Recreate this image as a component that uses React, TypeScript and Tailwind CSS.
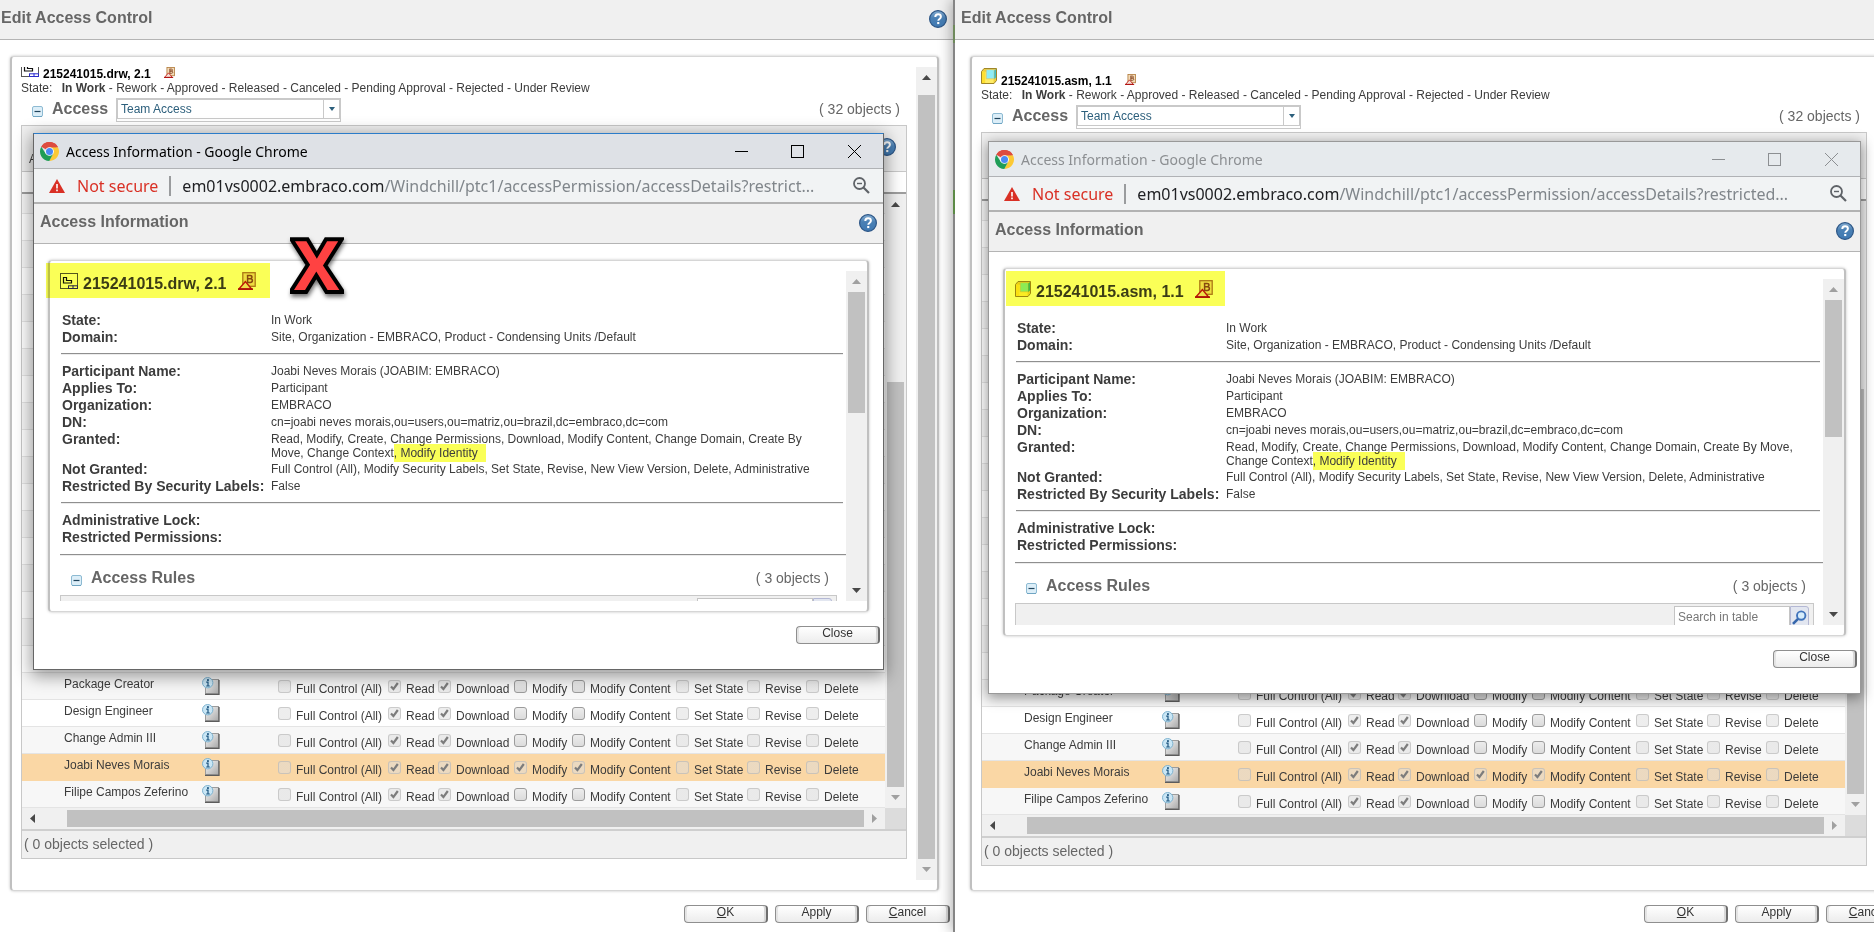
import React from "react";

type PaneData = {
  file: string;
  kind: "drw" | "asm";
  active: boolean;
  url: string;
};

const NAMES = [
  "Package Creator",
  "Design Engineer",
  "Change Admin III",
  "Joabi Neves Morais",
  "Filipe Campos Zeferino",
];

const PERMS = [
  { label: "Full Control (All)", width: "w-[110px]" },
  { label: "Read", width: "w-[50px]" },
  { label: "Download", width: "w-[76px]" },
  { label: "Modify", width: "w-[58px]" },
  { label: "Modify Content", width: "w-[104px]" },
  { label: "Set State", width: "w-[71px]" },
  { label: "Revise", width: "w-[59px]" },
  { label: "Delete", width: "w-auto" },
];

function HelpIcon() {
  return (
    <svg width="18" height="18" viewBox="0 0 18 18" aria-hidden="true" className="block">
      <defs>
        <linearGradient id="helpFill" x1="0" y1="0" x2="0" y2="1">
          <stop offset="0" stopColor="#86aed2" />
          <stop offset="0.45" stopColor="#4a80b4" />
          <stop offset="1" stopColor="#3f79b3" />
        </linearGradient>
      </defs>
      <circle cx="9" cy="9" r="8.4" fill="url(#helpFill)" stroke="#2d5686" strokeWidth="1.2" />
      <path d="M6.3 7.1c0-1.9 1.2-2.8 2.8-2.8s2.8.9 2.8 2.4c0 1.2-.7 1.7-1.5 2.3-.8.5-1.1.9-1.1 1.8" fill="none" stroke="#fff" strokeWidth="2" />
      <rect x="8.2" y="12" width="2.1" height="2.1" fill="#fff" />
    </svg>
  );
}

function DrawingIcon() {
  return (
    <svg width="18" height="16" viewBox="0 0 18 16" aria-hidden="true" className="block shrink-0">
      <rect x="0.5" y="0.5" width="17" height="15" fill="#fff" stroke="#555" />
      <path d="M3.5 4.5h3v3h5v2.5h-8z" fill="#fff" stroke="#111" strokeWidth="1.2" />
      <rect x="8.5" y="12.8" width="9" height="2.7" fill="#fff" stroke="#2a2ac8" />
      <path d="M13 12.5v3" stroke="#2020d8" />
    </svg>
  );
}

function AssemblyIcon() {
  return (
    <svg width="16" height="16" viewBox="0 0 16 16" aria-hidden="true" className="block shrink-0">
      <path d="M0.5 3.5L3 0.5h12.5v12l-2.5 3H0.5z" fill="#f0cf3c" stroke="#a08628" />
      <path d="M1 3.8h11.6v11.2H1z" fill="#ffec66" />
      <path d="M1 3.8h3.2v11.2H1z" fill="#ffe030" />
      <path d="M5.2 1.6h8v9.2h-8z" fill="#8fecf6" stroke="#e4c050" strokeWidth="0.6" />
      <path d="M13.2 2.4L15 0.9v8.6l-1.8 1.6z" fill="#45bac4" />
    </svg>
  );
}

function BaselineIcon({ size }: { size: number }) {
  return (
    <svg width={size} height={size} viewBox="0 0 18 18" aria-hidden="true" className="block shrink-0">
      <rect x="4.8" y="0.7" width="12.4" height="13.6" fill="#f3dcb8" stroke="#b07838" strokeWidth="1.3" />
      <path d="M8.8 3.4h3.2c2.6 0 2.6 3.3 0 3.3H9.4h2.9c2.8 0 2.8 3.7 0 3.7H8.8M9.6 3.4v7" fill="none" stroke="#8a4a28" strokeWidth="1.5" />
      <path d="M0.9 17L7.4 9.6 13.6 17z" fill="#f4e0d8" stroke="#c01810" strokeWidth="1.4" />
      <path d="M0 17.1h15" stroke="#b01010" strokeWidth="1.6" />
    </svg>
  );
}

function ChromeIcon() {
  return (
    <svg width="19" height="19" viewBox="0 0 20 20" aria-hidden="true" className="block shrink-0">
      <path d="M10 10L1.34 5A10 10 0 0 1 18.66 5z" fill="#dd4b3e" />
      <path d="M10 5.5h8.93A10 10 0 0 1 9.8 20L13.9 12.2z" fill="#fcc934" />
      <path d="M6.1 12.25L1.34 5A10 10 0 0 0 9.8 20l4.1-7.75z" fill="#1f9d57" />
      <path d="M1.34 5A10 10 0 0 1 18.93 5.5H10z" fill="#dd4b3e" />
      <circle cx="10" cy="10" r="4.6" fill="#fff" />
      <circle cx="10" cy="10" r="3.7" fill="#4a8af4" />
    </svg>
  );
}

function InfoPageIcon() {
  return (
    <svg width="18" height="18" viewBox="0 0 18 18" aria-hidden="true" className="block">
      <defs>
        <linearGradient id="pageFill" x1="0" y1="0" x2="1" y2="1">
          <stop offset="0" stopColor="#fafafa" />
          <stop offset="1" stopColor="#a8a8a8" />
        </linearGradient>
      </defs>
      <rect x="3.5" y="2.5" width="13" height="14" fill="url(#pageFill)" stroke="#9c9c9c" />
      <path d="M17 3v14.3H3" fill="none" stroke="#5c5c5c" strokeWidth="1.3" />
      <circle cx="5.7" cy="5.7" r="5.2" fill="#c9e6f5" stroke="#7db2cf" />
      <rect x="5" y="2.2" width="1.9" height="1.7" fill="#1d5580" />
      <path d="M4.2 5.2h1.8v3.8M4.2 9h3.6" fill="none" stroke="#1d5580" strokeWidth="1.2" />
    </svg>
  );
}

function CollapseButton({ label }: { label: string }) {
  return (
    <button type="button" aria-label={label} className="mt-1 block size-[11px] shrink-0">
      <svg width="11" height="11" viewBox="0 0 11 11" aria-hidden="true" className="block">
        <rect x="0.5" y="0.5" width="10" height="10" rx="1.5" fill="#dceef8" stroke="#8dbad2" />
        <path d="M1 10.5h9" stroke="#6fa5c3" />
        <path d="M2.5 5.5h6" stroke="#20445c" strokeWidth="1.2" />
      </svg>
    </button>
  );
}

const ARROWS = {
  up: "M0 5L4.5 0 9 5z",
  down: "M0 0h9L4.5 5z",
  left: "M5 0v9L0 4.5z",
  right: "M0 0v9l5-4.5z",
};

function Arrow({ dir, dark }: { dir: keyof typeof ARROWS; dark: boolean }) {
  const vertical = dir === "up" || dir === "down";
  return (
    <span className="flex size-[21px] shrink-0 items-center justify-center">
      <svg width={vertical ? 9 : 5} height={vertical ? 5 : 9} aria-hidden="true">
        <path d={ARROWS[dir]} fill={dark ? "#484848" : "#a0a0a0"} />
      </svg>
    </span>
  );
}

function ScrollBar({
  horizontal = false,
  before,
  thumb,
  after,
  startDark,
  endDark,
}: {
  horizontal?: boolean;
  before: number;
  thumb: number;
  after: number;
  startDark: boolean;
  endDark: boolean;
}) {
  return (
    <div className={horizontal ? "flex h-[21px] grow bg-[#f0f0f0]" : "flex w-[21px] shrink-0 flex-col bg-[#f0f0f0]"}>
      <Arrow dir={horizontal ? "left" : "up"} dark={startDark} />
      <div className={horizontal ? "flex grow py-[2px]" : "flex grow flex-col px-[2px]"}>
        <div style={{ flexGrow: before }} />
        <div className="bg-[#c1c1c1]" style={{ flexGrow: thumb }} />
        <div style={{ flexGrow: after }} />
      </div>
      <Arrow dir={horizontal ? "right" : "down"} dark={endDark} />
    </div>
  );
}

function PushButton({ children }: { children: React.ReactNode }) {
  return (
    <button
      type="button"
      className="h-[18px] w-[84px] rounded-[4px] border border-[#8f8f8f] border-r-2 border-r-[#6e6e6e] bg-linear-to-b from-white to-[#ececec] pb-1 text-[12px] leading-[12px] text-[#333] shadow-[inset_2px_0_0_#e4e4e4,inset_-2px_0_0_#d8d8d8]"
    >
      {children}
    </button>
  );
}

function Permission({ id, label, checked, locked }: { id: string; label: string; checked: boolean; locked: boolean }) {
  return (
    <div className="flex items-start pt-[7px]">
      <span className="relative block size-[13px] shrink-0">
        <input
          id={id}
          type="checkbox"
          defaultChecked={checked}
          disabled={locked}
          className="block size-[13px] appearance-none rounded-[3px] border border-[#9c9c9c] bg-linear-to-b from-[#ececec] to-[#dcdcdc] disabled:border-[#b4b4b4]/60 disabled:from-[#dddddd]/50 disabled:to-[#dddddd]/50"
        />
        {checked && (
          <svg width="13" height="13" viewBox="0 0 13 13" aria-hidden="true" className="pointer-events-none absolute inset-0">
            <path d="M3 6.6l2.4 2.5L9.8 3" fill="none" stroke="#7c7c7c" strokeWidth="2.2" />
          </svg>
        )}
      </span>
      <label htmlFor={id} className="ml-[5px] pt-[2px] text-[12px] leading-[14px] whitespace-nowrap">
        {label}
      </label>
    </div>
  );
}

function AccessTable({ kind }: { kind: string }) {
  const earlier = Array.from({ length: 18 }, (_, i) => i);
  return (
    <div className="flex h-[614px]">
      <div className="flex min-w-0 grow flex-col justify-end overflow-hidden">
        <table className="w-full table-fixed border-collapse">
          <colgroup>
            <col className="w-[42px]" />
            <col className="w-[138px]" />
            <col className="w-[76px]" />
            {PERMS.map((perm) => (
              <col key={perm.label} className={perm.width} />
            ))}
          </colgroup>
          <tbody>
            {earlier.map((i) => (
              <tr key={i} className={i % 2 === 0 ? "h-[27px] bg-[#f7f7f7]" : "h-[27px] bg-white"}>
                <td colSpan={11} className="border-b border-[#e4e4e4] p-0" />
              </tr>
            ))}
            {NAMES.map((name, row) => {
              const selected = row === 3;
              const tone = selected ? "h-[27px] bg-[#fad7a5]" : row % 2 === 0 ? "h-[27px] bg-[#f7f7f7]" : "h-[27px] bg-white";
              const cell = selected ? "border-b border-[#fad7a5] p-0 align-top" : "border-b border-[#e4e4e4] p-0 align-top";
              return (
                <tr key={name} className={tone}>
                  <td className={cell} />
                  <td className={cell}>
                    <div className="pt-[4px] text-[12px] leading-[14px] whitespace-nowrap">{name}</div>
                  </td>
                  <td className={cell}>
                    <div className="pt-[4px]">
                      <InfoPageIcon />
                    </div>
                  </td>
                  {PERMS.map((perm, col) => {
                    const editable = !selected && (col === 3 || col === 4);
                    const checked = col === 1 || col === 2 || (selected && (col === 3 || col === 4));
                    return (
                      <td key={perm.label} className={cell}>
                        <Permission id={kind + "-" + row + "-" + col} label={perm.label} checked={checked} locked={!editable} />
                      </td>
                    );
                  })}
                </tr>
              );
            })}
          </tbody>
        </table>
      </div>
      <ScrollBar before={167} thumb={405} after={0} startDark endDark={false} />
    </div>
  );
}

const FRAME =
  "rounded-[4px] border-x-2 border-y border-x-[#c0c0c0] border-y-[#d6d6d6] bg-white py-[10px] shadow-[0_0_3px_rgba(0,0,0,0.25)]";

function Details({ kind }: { kind: string }) {
  const label = "text-[14px] leading-[17px] font-bold whitespace-nowrap";
  const value = "py-px pr-1 text-[12px] leading-[14px]";
  const grid = "ml-[12px] grid grid-cols-[209px_1fr]";
  const rule = "ml-[11px] mr-[3px] my-[7px] border-t border-b border-t-[#8f8f8f] border-b-[#ececec]";
  return (
    <div className="text-[#3c3c3c]">
      <dl className={grid}>
        <dt className={label}>State:</dt>
        <dd className={value}>In Work</dd>
        <dt className={label}>Domain:</dt>
        <dd className={value}>Site, Organization - EMBRACO, Product - Condensing Units /Default</dd>
      </dl>
      <hr className={rule} />
      <dl className={grid + " pt-px"}>
        <dt className={label}>Participant Name:</dt>
        <dd className={value}>Joabi Neves Morais (JOABIM: EMBRACO)</dd>
        <dt className={label}>Applies To:</dt>
        <dd className={value}>Participant</dd>
        <dt className={label}>Organization:</dt>
        <dd className={value}>EMBRACO</dd>
        <dt className={label}>DN:</dt>
        <dd className={value}>cn=joabi neves morais,ou=users,ou=matriz,ou=brazil,dc=embraco,dc=com</dd>
        <dt className={label}>Granted:</dt>
        <dd className={value}>
          Read, Modify, Create, Change Permissions, Download, Modify Content, Change Domain, Create By{" "}
          {kind === "drw" && <br />}Move,{" "}
          {kind === "asm" && <br />}Change Context
          <span className="bg-[#faff57] py-[2px] pr-2 mix-blend-multiply">, Modify Identity</span>
        </dd>
        <dt className={label}>Not Granted:</dt>
        <dd className={value}>Full Control (All), Modify Security Labels, Set State, Revise, New View Version, Delete, Administrative</dd>
        <dt className={label}>Restricted By Security Labels:</dt>
        <dd className={value}>False</dd>
      </dl>
      <hr className={rule} />
      <dl className={grid + " pt-px"}>
        <dt className={label}>Administrative Lock:</dt>
        <dd />
        <dt className={label}>Restricted Permissions:</dt>
        <dd />
      </dl>
    </div>
  );
}

function Popup({ data }: { data: PaneData }) {
  const { kind, active } = data;
  const isDrawing = kind === "drw";
  return (
    <section
      className={
        active
          ? "absolute top-[133px] right-[69px] left-[33px] border border-[#666] border-t-[#2b7cc9] bg-white shadow-[0_4px_16px_2px_rgba(0,0,0,0.4)]"
          : "absolute top-[141px] right-[13px] left-[33px] border border-[#999] bg-white shadow-[0_3px_12px_1px_rgba(0,0,0,0.4)]"
      }
    >
      <div
        className={
          active
            ? "flex h-[35px] items-center border-b border-[#b0b2b5] bg-[#dee1e6] pl-[6px] text-black"
            : "flex h-[35px] items-center border-b border-[#b0b2b5] bg-[#e6eaed] pl-[6px] text-[#8c8f92]"
        }
      >
        <ChromeIcon />
        <span className="ml-[7px] grow pt-px font-['Noto_Sans','Open_Sans',sans-serif] text-[14px] leading-[20px] whitespace-nowrap">
          Access Information - Google Chrome
        </span>
        <button type="button" aria-label="Minimize" className="flex w-[56px] justify-center">
          <svg width="13" height="13" aria-hidden="true"><path d="M0 6.5h13" stroke="currentColor" /></svg>
        </button>
        <button type="button" aria-label="Maximize" className="flex w-[57px] justify-center">
          <svg width="13" height="13" aria-hidden="true"><rect x="0.5" y="0.5" width="12" height="12" fill="none" stroke="currentColor" /></svg>
        </button>
        <button type="button" aria-label="Close window" className="flex w-[57px] justify-center">
          <svg width="13" height="13" aria-hidden="true"><path d="M0 0l13 13M13 0L0 13" stroke="currentColor" /></svg>
        </button>
      </div>
      <div className="flex h-[35px] items-center border-b-2 border-[#b2b2b2] bg-[#f1f3f4] pr-[13px] pl-[15px] font-['Noto_Sans','Open_Sans',sans-serif] text-[16px] leading-[22px] text-[#202124]">
        <svg width="16" height="14" viewBox="0 0 16 14" aria-hidden="true" className="shrink-0">
          <path d="M8 0l8 14H0z" fill="#d93025" />
          <path d="M8 5v4.4M8 10.6v1.7" stroke="#fff" strokeWidth="1.6" />
        </svg>
        <span className="ml-[12px] whitespace-nowrap text-[#d93025]">Not secure</span>
        <span className="mx-[11px] h-[20px] w-[2px] shrink-0 bg-[#9a9c9e]" />
        <span className="min-w-0 grow overflow-hidden whitespace-nowrap">
          em01vs0002.embraco.com<span className="text-[#80868b]">{data.url}</span>
        </span>
        <button type="button" aria-label="Zoom" className="shrink-0">
          <svg width="17" height="17" viewBox="0 0 17 17" aria-hidden="true" className="block">
            <circle cx="6.5" cy="6.5" r="5.5" fill="none" stroke="#5f6368" strokeWidth="1.8" />
            <path d="M10.5 10.5L16 16" stroke="#5f6368" strokeWidth="2.2" />
            <path d="M4 6.5h5" stroke="#5f6368" strokeWidth="1.4" />
          </svg>
        </button>
      </div>
      <div className="flex h-[40px] items-center justify-between border-b border-[#b4b4b4] bg-[#f0f0f0] pr-[6px] pb-px pl-[6px]">
        <h2 className="pb-[3px] text-[16px] leading-[20px] font-bold text-[#666]">Access Information</h2>
        <button type="button" aria-label="Help"><HelpIcon /></button>
      </div>
      <div className={"relative mt-[16px] mr-[14px] ml-[14px] " + FRAME}>
        <div
          className={
            isDrawing
              ? "absolute top-[2px] left-[-4px] z-10 h-[35px] w-[224px] bg-[#faff57] mix-blend-multiply"
              : "absolute top-[2px] left-[1px] z-10 h-[35px] w-[219px] bg-[#faff57] mix-blend-multiply"
          }
        />
        <div className={isDrawing ? "flex h-[330px]" : "flex h-[346px]"}>
          <div className="min-w-0 grow overflow-hidden">
            <h3 className="mb-[17px] flex h-[24px] items-center pl-[10px] text-[16px] leading-[20px] font-bold text-[#3c3c3c]">
              <span className="pb-[4px]">{isDrawing ? <DrawingIcon /> : <AssemblyIcon />}</span>
              <span className="ml-[5px] pt-px">{data.file}</span>
              <span className="ml-[11px] pb-[4px]"><BaselineIcon size={18} /></span>
            </h3>
            <Details kind={kind} />
            <hr className="mt-[8px] ml-[10px] border-t border-b border-t-[#8f8f8f] border-b-[#ececec]" />
            <div className="flex h-[39px] items-center pt-[5px] pr-[17px] pl-[21px] text-[#666]">
              <CollapseButton label="Collapse access rules" />
              <h4 className="ml-[9px] grow text-[16px] leading-[20px] font-bold">Access Rules</h4>
              <span className="text-[14px] leading-[18px]">( 3 objects )</span>
            </div>
            <div className="mr-[9px] ml-[10px] flex justify-end border border-b-0 border-[#c8c8c8] bg-[#f0f0f0] pt-[2px] pr-[4px] pb-6">
              <input
                type="text"
                aria-label="Search in table"
                placeholder={isDrawing ? "" : "Search in table"}
                className="h-[22px] w-[116px] border border-[#c4c4c4] bg-white pl-[3px] text-[12px] placeholder:text-[#777]"
              />
              <button type="button" aria-label="Search" className="flex h-[22px] w-[19px] items-center justify-center rounded-tr-[3px] border border-[#b4b8d4] bg-[#e2e6f0]">
                <svg width="15" height="15" viewBox="0 0 15 15" aria-hidden="true">
                  <circle cx="9.2" cy="5.6" r="4.2" fill="#d6ecfb" stroke="#4174bc" strokeWidth="1.9" />
                  <path d="M6 8.8L1 13.8" stroke="#3566ac" strokeWidth="2.6" />
                </svg>
              </button>
            </div>
          </div>
          {isDrawing ? (
            <ScrollBar before={0} thumb={121} after={167} startDark={false} endDark />
          ) : (
            <ScrollBar before={0} thumb={137} after={167} startDark={false} endDark />
          )}
        </div>
      </div>
      <div className="flex justify-end pt-[14px] pr-[3px] pb-[25px]">
        <PushButton>Close</PushButton>
      </div>
    </section>
  );
}

function Pane({ data }: { data: PaneData }) {
  const isDrawing = data.kind === "drw";
  const selectId = "view-" + data.kind;
  return (
    <div className="relative flex min-h-screen flex-col bg-white text-[#3c3c3c]">
      <header
        className={
          isDrawing
            ? "flex h-[40px] items-center justify-between border-b border-[#b4b4b4] bg-[#f0f0f0] pr-[6px] pb-[3px] pl-px"
            : "flex h-[40px] items-center border-b border-[#b4b4b4] bg-[#f0f0f0] pb-[3px] pl-[6px]"
        }
      >
        <h1 className="text-[16px] leading-[20px] font-bold text-[#666]">Edit Access Control</h1>
        {isDrawing && <button type="button" aria-label="Help" className="pt-[2px]"><HelpIcon /></button>}
      </header>
      <main className={isDrawing ? "mt-[16px] mr-[14px] ml-[10px] flex grow flex-col " + FRAME : "mt-[16px] -mr-[25px] ml-[15px] flex grow flex-col " + FRAME}>
        <div className="flex grow">
          <div className="min-w-0 grow pr-[9px] pl-[9px]">
            <div className={isDrawing ? "flex h-[14px] items-end overflow-hidden" : "flex h-[21px] items-end"}>
              <span className={isDrawing ? "self-end pb-[4px]" : "self-start pt-px"}>{isDrawing ? <DrawingIcon /> : <AssemblyIcon />}</span>
              <span className="ml-[4px] text-[12px] leading-[14px] font-bold text-black">{data.file}</span>
              <span className="ml-[13px] pb-[3px]"><BaselineIcon size={11} /></span>
            </div>
            <p className="text-[12px] leading-[14px] whitespace-nowrap">
              State: <b className="ml-[6px]">In Work</b> - Rework - Approved - Released - Canceled - Pending Approval - Rejected - Under Review
            </p>
            <div className="flex h-[30px] items-center pr-[7px] pb-px pl-[11px] text-[#666]">
              <CollapseButton label="Collapse access" />
              <h2 className="ml-[9px] w-[64px] pb-px text-[16px] leading-[20px] font-bold">Access</h2>
              <label htmlFor={selectId} className="sr-only">View</label>
              <span className="relative block">
                <select id={selectId} defaultValue="team" className="block h-[24px] w-[225px] appearance-none border-2 border-b-4 border-double border-[#c9c9c9] bg-white pl-[3px] text-[12px] leading-[18px] text-[#2c5f7c]">
                  <option value="team">Team Access</option>
                </select>
                <span className="pointer-events-none absolute top-[2px] right-[2px] bottom-[3px] flex w-[16px] items-center justify-center border-l border-[#c9c9c9]">
                  <svg width="6" height="4" aria-hidden="true"><path d="M0 0h6L3 4z" fill="#2c5f7c" /></svg>
                </span>
              </span>
              <span className="grow pb-px text-right text-[14px] leading-[18px]">( 32 objects )</span>
            </div>
            <div className="border border-[#c8c8c8]">
              <div className="flex h-[46px] items-start justify-between border-b border-[#c8c8c8] bg-[#f0f0f0] pt-[12px] pr-[10px] pl-[7px]">
                <span className="pt-[14px] text-[12px] leading-[14px]">{isDrawing ? "A" : ""}</span>
                <HelpIcon />
              </div>
              <div className="h-[22px] border-b-2 border-[#9e9e9e] bg-white" />
              <AccessTable kind={data.kind} />
              <div className="flex bg-[#dcdcdc]">
                <ScrollBar horizontal before={24} thumb={797} after={0} startDark endDark={false} />
                <div className="w-[21px] shrink-0" />
              </div>
              <div className="h-[29px] border-t-2 border-[#cfcfcf] bg-[#f0f0f0] pl-[2px] text-[14px] leading-[27px] text-[#666]">( 0 objects selected )</div>
            </div>
          </div>
          {isDrawing && <ScrollBar before={7} thumb={765} after={0} startDark endDark={false} />}
          {!isDrawing && <ScrollBar before={14} thumb={758} after={0} startDark endDark={false} />}
        </div>
      </main>
      <footer className={isDrawing ? "flex h-[41px] items-start justify-end gap-[7px] pt-[14px] pr-[3px]" : "-mr-[36px] flex h-[41px] items-start justify-end gap-[7px] pt-[14px]"}>
        <PushButton><u>O</u>K</PushButton>
        <PushButton>Apply</PushButton>
        <PushButton><u>C</u>ancel</PushButton>
      </footer>
      <Popup data={data} />
      {isDrawing && (
        <div
          className="absolute top-[216px] left-[294px] font-['Open_Sans','Noto_Sans',sans-serif] text-[68px] leading-[96px] font-bold text-[#ff4242] drop-shadow-[1px_3px_2px_rgba(0,0,0,0.55)] [-webkit-text-stroke:8px_black] [paint-order:stroke_fill] [stroke-linejoin:round]"
        >
          X
        </div>
      )}
    </div>
  );
}

export default function App() {
  return (
    <div className="grid w-full grid-cols-[953fr_921fr] overflow-hidden bg-white font-['Liberation_Sans',Arial,sans-serif]">
      <div className="min-w-0">
        <Pane data={{ file: "215241015.drw, 2.1", kind: "drw", active: true, url: "/Windchill/ptc1/accessPermission/accessDetails?restrict..." }} />
      </div>
      <div className="relative z-10 min-w-0 border-l-2 border-[#858585] shadow-[-2px_0_12px_rgba(0,0,0,0.3)]">
        <Pane data={{ file: "215241015.asm, 1.1", kind: "asm", active: false, url: "/Windchill/ptc1/accessPermission/accessDetails?restricted..." }} />
        <span className="absolute top-[25px] -left-[2px] h-[18px] w-[2px] bg-[#6f8a5c]" />
        <span className="absolute top-[190px] -left-[2px] h-[24px] w-[2px] bg-[#5c8a46]" />
      </div>
    </div>
  );
}
